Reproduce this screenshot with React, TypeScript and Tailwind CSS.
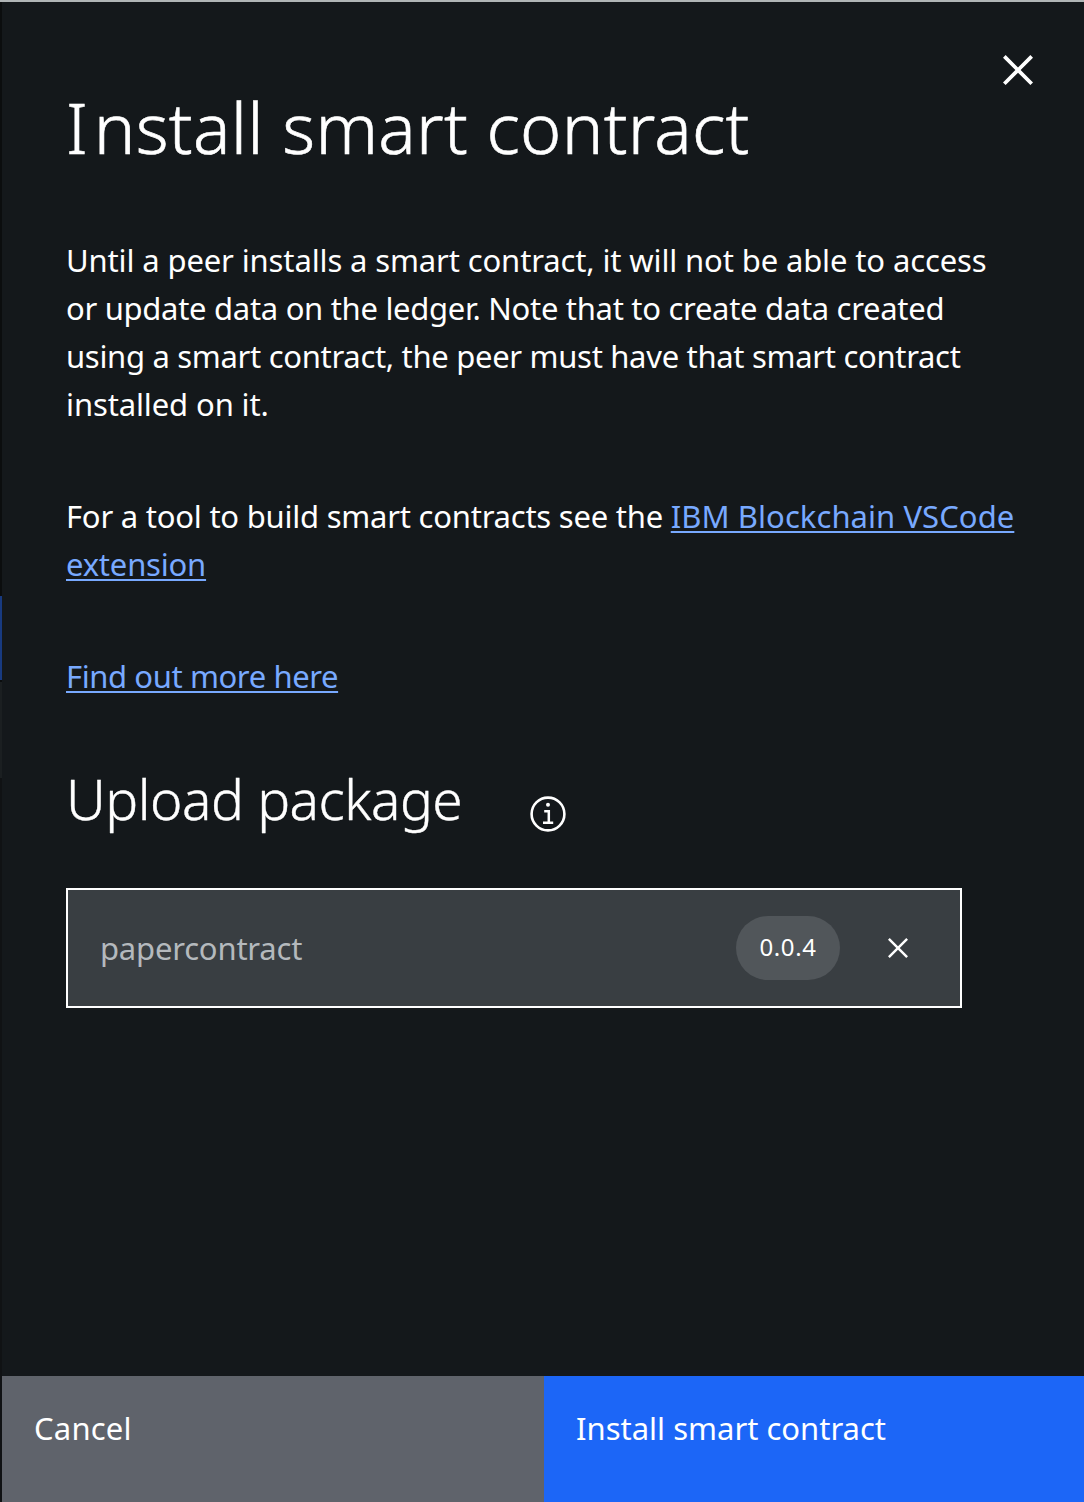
type CloseIconProps = { size: number };

function CloseIcon({ size }: CloseIconProps) {
  return (
    <svg width={size} height={size} viewBox="0 0 32 32" fill="currentColor" aria-hidden="true">
      <path d="M24 9.4L22.6 8 16 14.6 9.4 8 8 9.4l6.6 6.6L8 22.6 9.4 24l6.6-6.6 6.6 6.6 1.4-1.4-6.6-6.6L24 9.4z" />
    </svg>
  );
}

function InfoIcon() {
  return (
    <svg width="36" height="36" viewBox="0 0 36 36" fill="none" stroke="currentColor" aria-hidden="true">
      <circle cx="18" cy="18" r="16.4" strokeWidth="2.6" />
      <circle cx="18" cy="8.8" r="2" fill="currentColor" stroke="none" />
      <path d="M14.2 15.2h4.6v11.5M13 26.7h10.2" strokeWidth="2.5" />
    </svg>
  );
}

const linkClass =
  "text-[#78a9ff] underline decoration-2 underline-offset-[3px] [text-decoration-skip-ink:none]";

export default function App() {
  return (
    <div className="flex h-[1502px] w-[1084px] overflow-hidden bg-[#14181b] font-['Noto_Sans',sans-serif] text-white">
      {/* Sliver of the dimmed page behind the panel */}
      <div className="flex w-[2px] shrink-0 flex-col bg-[#101214]">
        <div className="h-[2px] bg-[#b0b5b6]" />
        <div className="h-[594px] bg-[#0b0d0e]" />
        <div className="h-[84px] bg-[#183a80]" />
        <div className="h-[2px] bg-[#0b0d0e]" />
        <div className="h-[96px] bg-[#1b1f21]" />
      </div>

      <section className="flex min-w-0 flex-1 flex-col border-t-2 border-[#b0b5b6]">
        <div className="relative flex-1 pl-16">
          <button aria-label="Close" className="absolute top-[38px] right-[36px]">
            <CloseIcon size={60} />
          </button>

          <h1 className="pt-[77px] text-[70px] leading-[96px] font-light tracking-[0.27px] [-webkit-text-stroke:0.6px_white]">
            <span className="tracking-[6px]">I</span>nstall smart contract
          </h1>

          <p className="mt-[61px] text-[31px] leading-[48px] whitespace-nowrap">
            <span className="block tracking-[-0.13px]">
              Until a peer installs a smart contract, it will not be able to access
            </span>
            <span className="block tracking-[-0.3px]">
              or update data on the ledger. Note that to create data created
            </span>
            <span className="block tracking-[-0.31px]">
              using a smart contract, the peer must have that smart contract
            </span>
            <span className="block tracking-[-0.12px]">installed on it.</span>
          </p>

          <p className="mt-16 text-[31px] leading-[48px] whitespace-nowrap">
            <span className="tracking-[-0.23px]">For a tool to build smart contracts see the </span>
            <a className={linkClass}>
              <span className="tracking-[0.06px]">IBM Blockchain VSCode</span>
              <br />
              <span className="tracking-[-0.2px]">extension</span>
            </a>
          </p>

          <p className="mt-16 text-[31px] leading-[48px] tracking-[-0.4px]">
            <a className={linkClass}>Find out more here</a>
          </p>

          <div className="mt-[63px] flex items-start">
            <h2 className="w-[464px] text-[55px] leading-[72px] font-light tracking-[-0.5px] [-webkit-text-stroke:0.4px_white]">
              Upload package
            </h2>
            <span className="mt-[33px]">
              <InfoIcon />
            </span>
          </div>

          <div className="mt-[53px] flex h-[120px] w-[896px] items-center border-2 border-white bg-[#393e42] pl-8">
            <span className="flex-1 text-[31px] tracking-[-0.2px] text-[#b4b9bd]">papercontract</span>
            <span className="flex h-16 w-[104px] items-center justify-center rounded-full bg-[#51565a] pb-[2px] text-[24px] tracking-[0.6px]">
              0.0.4
            </span>
            <button aria-label="Remove package" className="mr-[42px] ml-[38px]">
              <CloseIcon size={40} />
            </button>
          </div>
        </div>

        <footer className="flex h-[126px] text-[31px] leading-[48px]">
          <button className="flex w-[542px] items-start bg-[#5f636b] pt-[28px] pl-8 tracking-[0.2px]">
            Cancel
          </button>
          <button className="flex flex-1 items-start bg-[#1c66f7] pt-[28px] pl-8">
            Install smart contract
          </button>
        </footer>
      </section>
    </div>
  );
}
